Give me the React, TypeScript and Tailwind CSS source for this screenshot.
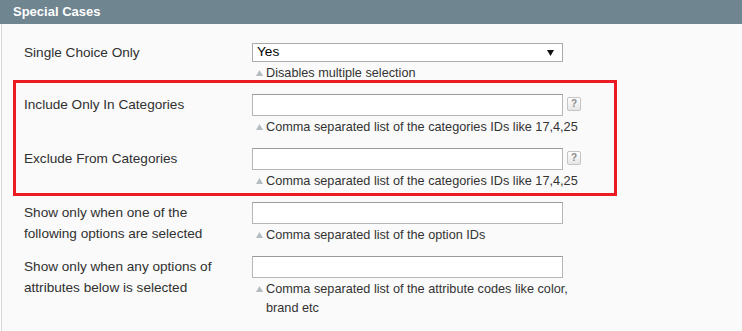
import React from "react";

type Field = {
  label: React.ReactNode;
  hint: string;
  help?: boolean;
};

const fields: Field[] = [
  {
    label: "Include Only In Categories",
    hint: "Comma separated list of the categories IDs like 17,4,25",
    help: true,
  },
  {
    label: "Exclude From Categories",
    hint: "Comma separated list of the categories IDs like 17,4,25",
    help: true,
  },
  {
    label: "Show only when one of the following options are selected",
    hint: "Comma separated list of the option IDs",
  },
  {
    label: "Show only when any options of attributes below is selected",
    hint: "Comma separated list of the attribute codes like color, brand etc",
  },
];

function Hint({ text }: { text: string }) {
  return (
    <div className="mt-[2px] flex w-[334px] text-[12.7px] leading-[19px] text-[#333]">
      <svg width="7" height="6" viewBox="0 0 7 6" className="ml-[4px] mr-[3px] mt-[6px] shrink-0">
        <path d="M3.5 0 L7 6 L0 6 Z" fill="#b3bcc0" />
      </svg>
      <span>{text}</span>
    </div>
  );
}

function HelpButton() {
  return (
    <div className="ml-[4px] mt-[3px] flex h-[14px] w-[14px] items-center justify-center rounded-[2px] border border-[#c4c4c4] bg-gradient-to-b from-white to-[#e6e6e6] text-[10px] font-bold leading-none text-[#8a8a8a]">
      ?
    </div>
  );
}

export default function App() {
  return (
    <div className="h-[331px] w-[742px] overflow-hidden bg-white font-['Liberation_Sans',Arial,sans-serif]">
      <div className="flex h-[24px] items-center bg-[#6f8590] px-[13px] text-[13px] font-bold text-white">
        Special Cases
      </div>

      <div className="relative ml-px h-[307px] border-l border-[#d6d6d6] bg-[#fafafa] pl-[22px] pt-[19px]">
        {/* single choice */}
        <div className="grid grid-cols-[228px_auto] pb-[11px]">
          <div className="w-[205px] text-[13.6px] leading-[19px] text-[#303030]">Single Choice Only</div>
          <div>
            <div className="flex h-[19px] w-[311px] items-center justify-between border border-[#aaa] bg-white pl-[4px] pr-[8px] text-[13.6px] text-black">
              <span>Yes</span>
              <svg width="7" height="6" viewBox="0 0 7 6">
                <path d="M0 0 L7 0 L3.5 6 Z" fill="#111" />
              </svg>
            </div>
            <Hint text="Disables multiple selection" />
          </div>
        </div>

        {fields.map((f, i) => (
          <div key={i} className="grid grid-cols-[228px_auto] pb-[11px]">
            <div className="w-[205px] text-[13.6px] leading-[21px] text-[#303030]">{f.label}</div>
            <div>
              <div className="flex">
                <div className="h-[22px] w-[311px] border border-[#b5b5b5] border-t-[#9a9a9a] bg-white" />
                {f.help && <HelpButton />}
              </div>
              <Hint text={f.hint} />
            </div>
          </div>
        ))}

        {/* highlight annotation */}
        <div className="pointer-events-none absolute left-[11px] top-[56px] h-[116px] w-[604px] border-[3px] border-[#ec1c24]" />
      </div>
    </div>
  );
}
